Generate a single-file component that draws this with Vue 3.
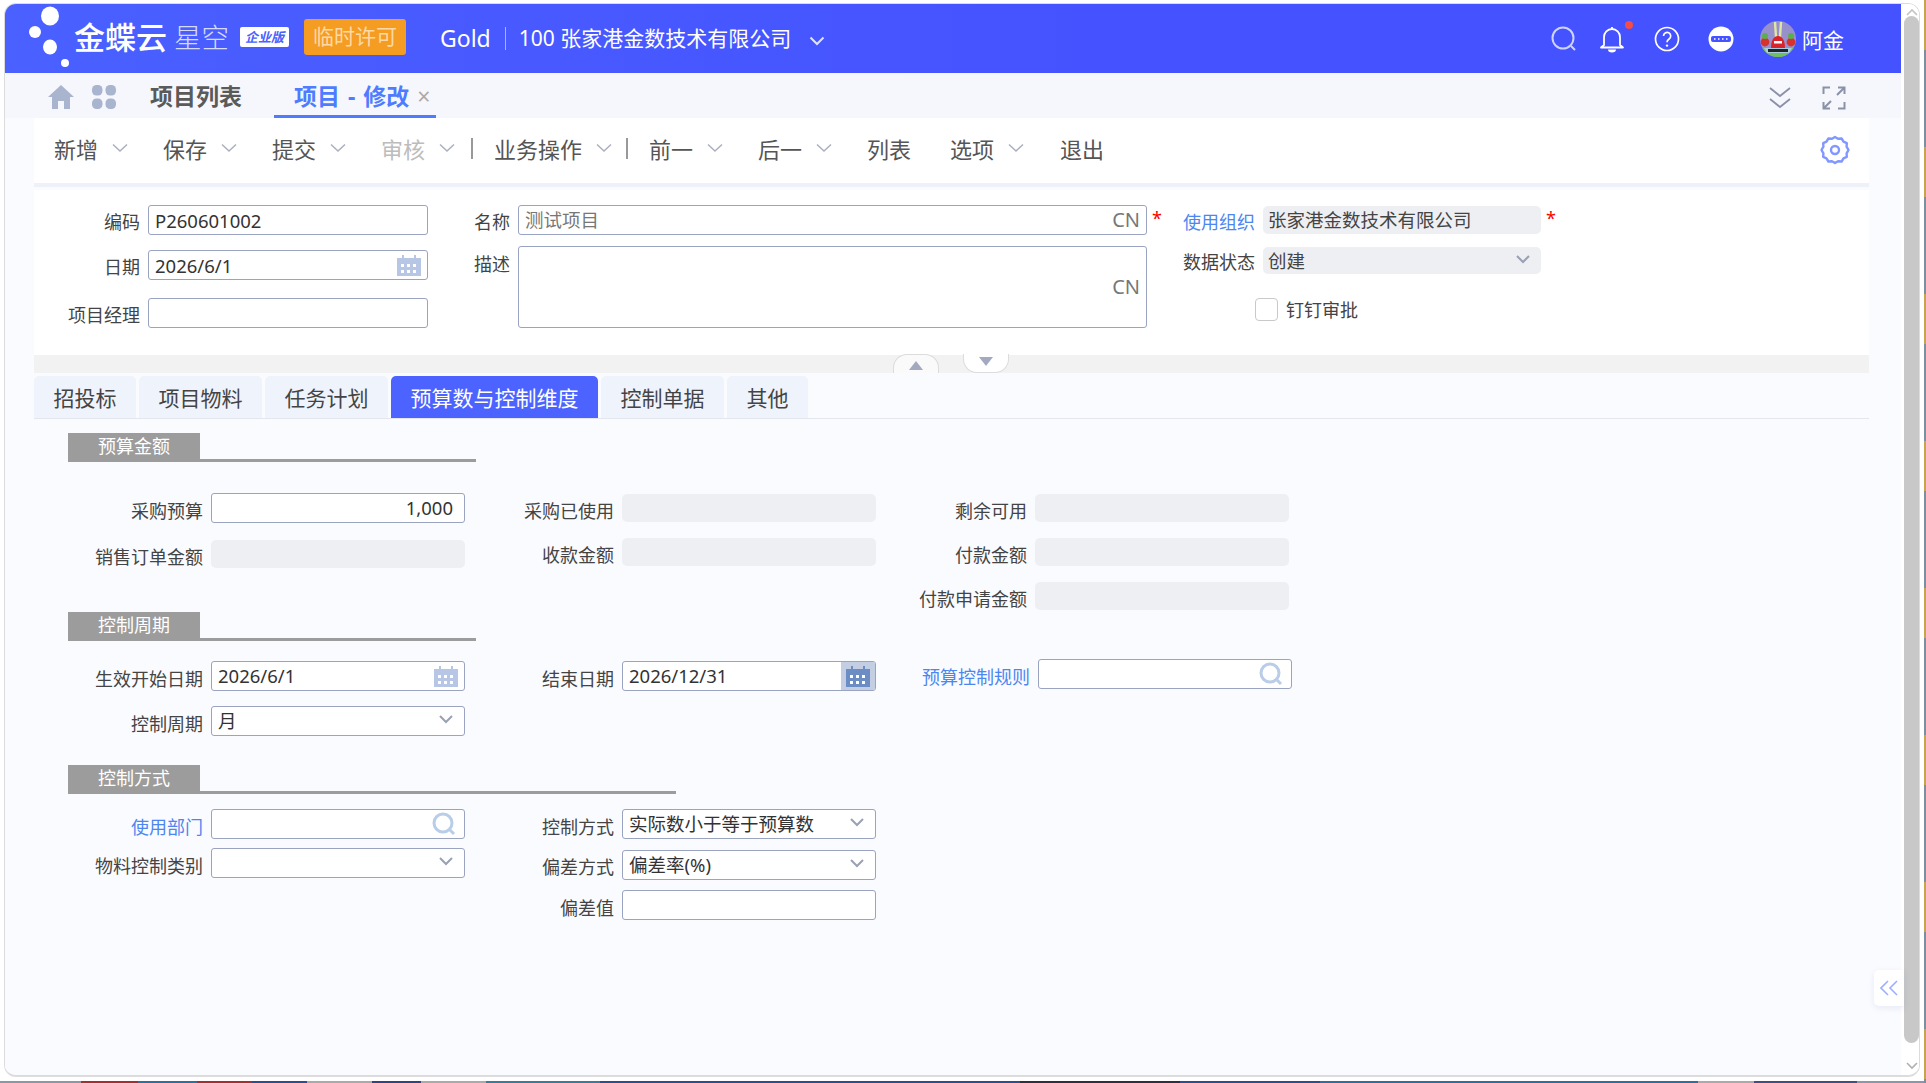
<script setup>
const toolbar = [
  { text: '新增', w: 109 },
  { text: '保存', w: 109 },
  { text: '提交', w: 109 },
  { text: '审核', w: 90, off: true, pipe: true },
  { text: '业务操作', w: 132, pipe: true },
  { text: '前一', w: 109 },
  { text: '后一', w: 109 },
  { text: '列表', w: 83, plain: true },
  { text: '选项', w: 110 },
  { text: '退出', plain: true },
]

const tabs = ['招投标', '项目物料', '任务计划', '预算数与控制维度', '控制单据', '其他']
</script>

<template>
  <div class="desktop">
    <div class="window">
      <div class="main">
        <!-- 顶部导航 -->
        <header class="topbar">
          <div class="logo">
            <svg class="logo-dots" width="48" height="66" viewBox="0 0 48 66">
              <ellipse cx="26" cy="12" rx="9" ry="9.5" fill="#fff" />
              <circle cx="11" cy="28" r="6" fill="#fff" />
              <ellipse cx="26" cy="43" rx="7" ry="7.5" fill="#fff" />
              <circle cx="41" cy="59" r="4" fill="#fff" />
            </svg>
            <span class="logo-main">金蝶云</span>
            <span class="logo-sub">星空</span>
            <span class="logo-badge">企业版</span>
          </div>
          <span class="license">临时许可</span>
          <span class="edition">Gold</span>
          <span class="org">100 张家港金数技术有限公司</span>
          <svg class="org-arrow" width="16" height="10" viewBox="0 0 16 10">
            <path d="M1.5 1.5 8 8l6.5-6.5" fill="none" stroke="#dfe3ff" stroke-width="2" />
          </svg>
          <div class="top-icons">
            <svg class="icon-search" width="28" height="28" viewBox="0 0 28 28">
              <circle cx="13" cy="13" r="10.5" fill="none" stroke="#cdd3ff" stroke-width="2" />
              <path d="m21 21 4 4" stroke="#cdd3ff" stroke-width="2" />
            </svg>
            <span class="bell">
              <svg width="26" height="28" viewBox="0 0 26 28">
                <path d="M13 2v2M5 20V12a8 8 0 0 1 16 0v8l3 2.5H2L5 20Z" fill="none" stroke="#fff" stroke-width="1.8" stroke-linejoin="round" />
                <path d="M9 24.5h8a4 3 0 0 1-8 0Z" fill="#fff" />
              </svg>
              <i class="dot"></i>
            </span>
            <svg class="icon-help" width="26" height="26" viewBox="0 0 26 26">
              <circle cx="13" cy="13" r="11.5" fill="none" stroke="#fff" stroke-width="1.7" />
              <path d="M9.5 10a3.6 3.6 0 1 1 5.6 3c-1.3.9-2.1 1.5-2.1 3.2" fill="none" stroke="#fff" stroke-width="1.7" />
              <circle cx="13" cy="19.6" r="1.2" fill="#fff" />
            </svg>
            <svg class="icon-minus" width="26" height="26" viewBox="0 0 26 26">
              <circle cx="13" cy="13" r="12.5" fill="#fff" />
              <rect x="3" y="10" width="20" height="6" rx="2" fill="#4552ff" />
              <path d="M6 13h14" stroke="#fff" stroke-width="1.5" stroke-dasharray="1.5 2.5" />
            </svg>
            <svg class="avatar" width="36" height="36" viewBox="0 0 36 36">
              <clipPath id="ava"><circle cx="18" cy="18" r="18" /></clipPath>
              <g clip-path="url(#ava)">
                <rect width="36" height="36" fill="#9890cc" />
                <rect y="27" width="36" height="9" fill="#6fbf5a" />
                <path d="M4 27h28l-3 5H7Z" fill="#a7cbe0" />
                <path d="M15 1l1 15M21 1l-1 15" fill="none" stroke="#dfe8a0" stroke-width="2.4" />
                <path d="M11 27c0-8 3-12 7-12s7 4 7 12Z" fill="#d8232a" />
                <circle cx="5" cy="21" r="4.4" fill="#d8322f" />
                <circle cx="31" cy="21" r="4.4" fill="#d8322f" />
                <circle cx="5" cy="15" r="3" fill="#58b04c" />
                <circle cx="31" cy="15" r="3" fill="#58b04c" />
                <rect x="8" y="28" width="20" height="3" fill="#222" />
                <rect x="14" y="20" width="8" height="2.5" fill="#fff" />
              </g>
            </svg>
            <span class="user">阿金</span>
          </div>
        </header>

        <!-- 页签 -->
        <nav class="page-tabs">
          <svg class="home" width="26" height="24" viewBox="0 0 26 24">
            <path d="M13 0 26 12h-4v12h-6v-8h-6v8H4V12H0Z" fill="#a9b5cf" />
          </svg>
          <svg class="apps" width="24" height="24" viewBox="0 0 24 24">
            <g fill="#a9b5cf">
              <rect x="0" y="0" width="10.5" height="10.5" rx="4.5" />
              <rect x="13.5" y="0" width="10.5" height="10.5" rx="4.5" />
              <rect x="0" y="13.5" width="10.5" height="10.5" rx="4.5" />
              <rect x="13.5" y="13.5" width="10.5" height="10.5" rx="4.5" />
            </g>
          </svg>
          <span class="page-tab">项目列表</span>
          <span class="page-tab active">项目 - 修改<i class="close">×</i></span>
          <svg class="collapse" width="24" height="24" viewBox="0 0 24 24">
            <path d="M2 2l10 8 10-8M2 13l10 8 10-8" fill="none" stroke="#8b92a8" stroke-width="1.8" />
          </svg>
          <svg class="expand" width="24" height="24" viewBox="0 0 24 24">
            <path d="M8 1.5H1.5V8M16 1.5h6.5V8M1.5 16v6.5H8M22.5 16v6.5H16M15 9l7-7M9 15l-7 7" fill="none" stroke="#8b92a8" stroke-width="2" />
          </svg>
        </nav>

        <div class="content">
          <!-- 工具栏 -->
          <div class="toolbar">
            <template v-for="item in toolbar" :key="item.text">
              <div class="tool" :class="{ off: item.off }" :style="{ width: item.w ? item.w + 'px' : 'auto' }">
                <span>{{ item.text }}</span>
                <svg v-if="!item.plain" width="16" height="10" viewBox="0 0 16 10">
                  <path d="M1 1.5 8 8l7-6.5" fill="none" stroke="#aab0bf" stroke-width="1.5" />
                </svg>
              </div>
              <i v-if="item.pipe" class="pipe"></i>
            </template>
            <svg class="gear" width="30" height="30" viewBox="0 0 30 30">
              <path d="M15 2l3 1.800 3.600-.3 1.900 3.100 3.300 1.500-.2 3.600L28.500 15l-1.900 3.300.2 3.600-3.300 1.500-1.900 3.100-3.600-.3L15 28l-3-1.800-3.600.3-1.900-3.100-3.300-1.500.2-3.600L1.500 15l1.900-3.300-.2-3.600 3.300-1.500 1.900-3.100 3.600.3Z" fill="none" stroke="#8297ff" stroke-width="2.4" stroke-linejoin="round" />
              <circle cx="15" cy="15" r="4" fill="none" stroke="#8297ff" stroke-width="2.4" />
            </svg>
          </div>

          <!-- 表头 -->
          <div class="head-form">
            <div class="head-col first">
              <div class="row">
                <label class="lb w-head">编码</label>
                <div class="box w-280">P260601002</div>
              </div>
              <div class="row">
                <label class="lb w-head">日期</label>
                <div class="box w-280">
                  2026/6/1
                  <svg class="cal" width="24" height="22" viewBox="0 0 24 22">
                    <path d="M0 4h5V1h2v3h10V1h2v3h5v18H0Z" fill="#b7c6e4" />
                    <g fill="#fff"><rect x="4" y="10" width="3" height="3" /><rect x="10" y="10" width="3" height="3" /><rect x="16" y="10" width="3" height="3" /><rect x="4" y="16" width="3" height="3" /><rect x="10" y="16" width="3" height="3" /><rect x="16" y="16" width="3" height="3" /></g>
                  </svg>
                </div>
              </div>
              <div class="row row-last">
                <label class="lb w-head">项目经理</label>
                <div class="box w-280"></div>
              </div>
            </div>
            <div class="head-col second">
              <div class="row">
                <label class="lb w-name">名称</label>
                <div class="box w-628 gray">测试项目<span class="cn">CN</span></div>
                <span class="star">*</span>
              </div>
              <div class="row row-desc">
                <label class="lb w-name desc-lb">描述</label>
                <div class="box w-628 area"><span class="cn">CN</span></div>
              </div>
            </div>
            <div class="head-col third">
              <div class="row">
                <label class="lb w-org link">使用组织</label>
                <div class="box w-278 dis">张家港金数技术有限公司</div>
                <span class="star">*</span>
              </div>
              <div class="row row-state">
                <label class="lb w-org">数据状态</label>
                <div class="box w-278 dis thin">
                  创建
                  <svg class="arr" width="14" height="9" viewBox="0 0 14 9"><path d="M1 1l6 6 6-6" fill="none" stroke="#9aa1b3" stroke-width="2" /></svg>
                </div>
              </div>
              <div class="check-row">
                <i class="check"></i>
                <span>钉钉审批</span>
              </div>
            </div>
          </div>

          <!-- 折叠条 -->
          <div class="fold">
            <span class="fold-btn up"><i></i></span>
            <span class="fold-btn down"><i></i></span>
          </div>

          <div class="tabs">
            <span v-for="(t, i) in tabs" :key="t" class="tab" :class="{ on: i === 3 }">{{ t }}</span>
          </div>

          <!-- 预算金额 -->
          <section class="sec sec-money">
            <div class="sec-title line-408"><span>预算金额</span></div>
            <div class="cols">
              <div class="col1 gap16">
                <div class="row">
                  <label class="lb w1">采购预算</label>
                  <div class="box w-254 right">1,000</div>
                </div>
                <div class="row">
                  <label class="lb w1">销售订单金额</label>
                  <div class="box w-254 dis"></div>
                </div>
              </div>
              <div class="col2 gap14">
                <div class="row">
                  <label class="lb w2">采购已使用</label>
                  <div class="box w-254 dis"></div>
                </div>
                <div class="row">
                  <label class="lb w2">收款金额</label>
                  <div class="box w-254 dis"></div>
                </div>
              </div>
              <div class="col3 gap14">
                <div class="row">
                  <label class="lb w3">剩余可用</label>
                  <div class="box w-254 dis"></div>
                </div>
                <div class="row">
                  <label class="lb w3">付款金额</label>
                  <div class="box w-254 dis"></div>
                </div>
                <div class="row">
                  <label class="lb w3">付款申请金额</label>
                  <div class="box w-254 dis"></div>
                </div>
              </div>
            </div>
          </section>

          <!-- 控制周期 -->
          <section class="sec sec-period">
            <div class="sec-title line-408"><span>控制周期</span></div>
            <div class="cols">
              <div class="col1 gap15">
                <div class="row">
                  <label class="lb w1">生效开始日期</label>
                  <div class="box w-254">
                    2026/6/1
                    <svg class="cal" width="24" height="22" viewBox="0 0 24 22">
                      <path d="M0 4h5V1h2v3h10V1h2v3h5v18H0Z" fill="#b7c6e4" />
                      <g fill="#fff"><rect x="4" y="10" width="3" height="3" /><rect x="10" y="10" width="3" height="3" /><rect x="16" y="10" width="3" height="3" /><rect x="4" y="16" width="3" height="3" /><rect x="10" y="16" width="3" height="3" /><rect x="16" y="16" width="3" height="3" /></g>
                    </svg>
                  </div>
                </div>
                <div class="row">
                  <label class="lb w1">控制周期</label>
                  <div class="box w-254">
                    月
                    <svg class="arr" width="14" height="9" viewBox="0 0 14 9"><path d="M1 1l6 6 6-6" fill="none" stroke="#9aa1b3" stroke-width="2" /></svg>
                  </div>
                </div>
              </div>
              <div class="col2">
                <div class="row">
                  <label class="lb w2">结束日期</label>
                  <div class="box w-254">
                    2026/12/31
                    <span class="cal-cell">
                      <svg width="24" height="22" viewBox="0 0 24 22">
                        <path d="M0 4h5V1h2v3h10V1h2v3h5v18H0Z" fill="#6c8cc4" />
                        <g fill="#fff"><rect x="4" y="10" width="3" height="3" /><rect x="10" y="10" width="3" height="3" /><rect x="16" y="10" width="3" height="3" /><rect x="4" y="16" width="3" height="3" /><rect x="10" y="16" width="3" height="3" /><rect x="16" y="16" width="3" height="3" /></g>
                      </svg>
                    </span>
                  </div>
                </div>
              </div>
              <div class="col3 rule">
                <div class="row">
                  <label class="lb w3r link">预算控制规则</label>
                  <div class="box w-254">
                    <svg class="find" width="24" height="24" viewBox="0 0 24 24">
                      <circle cx="11" cy="11" r="9" fill="none" stroke="#b9cde8" stroke-width="3" />
                      <path d="m17 17 5 5" stroke="#b9cde8" stroke-width="3" />
                    </svg>
                  </div>
                </div>
              </div>
            </div>
          </section>

          <!-- 控制方式 -->
          <section class="sec sec-mode">
            <div class="sec-title line-608"><span>控制方式</span></div>
            <div class="cols">
              <div class="col1 gap9">
                <div class="row">
                  <label class="lb w1 link">使用部门</label>
                  <div class="box w-254">
                    <svg class="find" width="24" height="24" viewBox="0 0 24 24">
                      <circle cx="11" cy="11" r="9" fill="none" stroke="#b9cde8" stroke-width="3" />
                      <path d="m17 17 5 5" stroke="#b9cde8" stroke-width="3" />
                    </svg>
                  </div>
                </div>
                <div class="row">
                  <label class="lb w1">物料控制类别</label>
                  <div class="box w-254">
                    <svg class="arr" width="14" height="9" viewBox="0 0 14 9"><path d="M1 1l6 6 6-6" fill="none" stroke="#9aa1b3" stroke-width="2" /></svg>
                  </div>
                </div>
              </div>
              <div class="col2 gap10">
                <div class="row">
                  <label class="lb w2">控制方式</label>
                  <div class="box w-254">
                    实际数小于等于预算数
                    <svg class="arr" width="14" height="9" viewBox="0 0 14 9"><path d="M1 1l6 6 6-6" fill="none" stroke="#9aa1b3" stroke-width="2" /></svg>
                  </div>
                </div>
                <div class="row">
                  <label class="lb w2">偏差方式</label>
                  <div class="box w-254">
                    偏差率(%)
                    <svg class="arr" width="14" height="9" viewBox="0 0 14 9"><path d="M1 1l6 6 6-6" fill="none" stroke="#9aa1b3" stroke-width="2" /></svg>
                  </div>
                </div>
                <div class="row">
                  <label class="lb w2">偏差值</label>
                  <div class="box w-254"></div>
                </div>
              </div>
            </div>
          </section>

          <!-- 右侧收起按钮 -->
          <div class="side-btn">
            <svg width="18" height="16" viewBox="0 0 18 16">
              <path d="M8 1 1 8l7 7M17 1l-7 7 7 7" fill="none" stroke="#9db0ff" stroke-width="1.6" />
            </svg>
          </div>
        </div>
      </div>

      <!-- 滚动条 -->
      <div class="scrollbar">
        <svg width="12" height="8" viewBox="0 0 12 8"><path d="M1 7l5-5 5 5" fill="none" stroke="#c4c4c4" stroke-width="1.6" /></svg>
        <div class="thumb"></div>
        <svg width="12" height="8" viewBox="0 0 12 8"><path d="M1 1l5 5 5-5" fill="none" stroke="#b0b0b0" stroke-width="1.6" /></svg>
      </div>
    </div>
  </div>
</template>

<style>
html, body {
  margin: 0;
  overflow: hidden;
}
</style>

<style scoped>
* {
  box-sizing: border-box;
}

.desktop {
  width: 1926px;
  height: 1083px;
  padding: 3px 6px 6px 4px;
  background-color: #fff;
  background-image:
    repeating-linear-gradient(to bottom, #c9a24f 0, #c9a24f 50px, #7d8f9f 50px, #7d8f9f 147px),
    linear-gradient(to right, #8b97a5 0, #8b97a5 81px, #a33030 81px, #a33030 138px, #2f6f9f 138px, #2f6f9f 197px, #a33030 197px, #a33030 252px, #2a4f90 252px, #2a4f90 307px, #aaa 307px, #aaa 372px, #2f4580 372px, #2f4580 421px, #aaa 421px, #aaa 486px, #3a7a9a 486px, #3a7a9a 600px, #2a4f90 600px, #2a4f90 1020px, #2c3040 1020px, #2c3040 1180px, #2a4f90 1180px, #2a4f90 1320px, #2f6f9f 1320px, #2f6f9f 1698px, #aaa 1698px, #aaa 1754px, #3e4f86 1754px, #3e4f86 1857px, #8a97a8 1857px);
  background-repeat: no-repeat;
  background-size: 2px 100%, 100% 2px;
  background-position: right top, left bottom;
  font-family: "Noto Sans", "Noto Sans CJK SC", sans-serif;
  color: #333;
}

.window {
  height: 100%;
  display: flex;
  background: #fff;
  border: 1px solid #dcdcdc;
  border-bottom-width: 2px;
  border-radius: 12px;
  overflow: hidden;
}

.main {
  width: 1896px;
  display: flex;
  flex-direction: column;
}

/* 顶部导航 */
.topbar {
  height: 69px;
  flex: none;
  display: flex;
  align-items: center;
  background: linear-gradient(to right, #4a60ff, #4552ff 60%);
  color: #fff;
}

.logo {
  width: 299px;
  height: 69px;
  flex: none;
  display: flex;
  align-items: center;
  padding-left: 19px;
}

.logo-dots {
  flex: none;
  margin-top: -3px;
}

.logo-main {
  margin-left: 2px;
  font-size: 31px;
  line-height: 1;
  font-weight: 500;
  margin-top: -2px;
}

.logo-sub {
  margin-left: 7px;
  font-size: 27.5px;
  line-height: 1;
  font-weight: 300;
  color: #d5dbff;
  margin-top: -2px;
}

.logo-badge {
  margin-left: 11px;
  width: 49px;
  height: 20px;
  background: #fff;
  border-radius: 2px;
  color: #4a60ff;
  font-size: 13px;
  line-height: 20px;
  font-style: italic;
  font-weight: 700;
  text-align: center;
  margin-top: -4px;
}

.license {
  width: 102px;
  height: 36px;
  flex: none;
  background: #f59c23;
  border-radius: 3px;
  color: #fdd9a5;
  font-size: 21px;
  line-height: 34px;
  text-align: center;
  margin-top: -4px;
}

.edition {
  margin-left: 34px;
  font-size: 23px;
  line-height: 1;
  padding-right: 14px;
  border-right: 1px solid #aab3ff;
  margin-top: -1px;
}

.org {
  margin-left: 13px;
  font-size: 21px;
  line-height: 1;
  margin-top: -1px;
}

.org-arrow {
  margin-left: 18px;
  margin-top: 4px;
}

.top-icons {
  margin-left: auto;
  display: flex;
  align-items: center;
}

.icon-search {
  margin-right: 21px;
}

.bell {
  position: relative;
  display: block;
  height: 28px;
  margin-right: 29px;
}

.dot {
  position: absolute;
  top: -4px;
  right: -8px;
  width: 8px;
  height: 8px;
  border-radius: 50%;
  background: #f44b4b;
}

.icon-help {
  margin-right: 28px;
}

.icon-minus {
  margin-right: 26px;
}

.avatar {
  margin-right: 6px;
}

.user {
  width: 99px;
  font-size: 21px;
}

/* 页签 */
.page-tabs {
  height: 45px;
  flex: none;
  display: flex;
  align-items: center;
  background: #f5f7fc;
  padding-left: 43px;
}

.home {
  margin-right: 18px;
  margin-top: 2px;
}

.apps {
  margin-right: 34px;
  margin-top: 2px;
}

.page-tab {
  height: 45px;
  font-size: 23px;
  font-weight: 700;
  line-height: 46px;
  color: #5a5a5a;
}

.page-tab.active {
  margin-left: 32px;
  width: 162px;
  padding-left: 20px;
  color: #4f7cff;
  border-bottom: 3px solid #4f7cff;
  white-space: nowrap;
  word-spacing: 2px;
}

.close {
  margin-left: 8px;
  font-style: normal;
  font-weight: 400;
  color: #aaa;
}

.collapse {
  margin-left: auto;
  margin-top: 5px;
}

.expand {
  margin-left: 30px;
  margin-right: 55px;
  margin-top: 5px;
}

/* 内容区 */
.content {
  position: relative;
  flex: 1;
  background: #fafbff;
  padding: 0 32px 0 29px;
}

.toolbar {
  height: 65px;
  display: flex;
  align-items: center;
  background: #fff;
  padding-left: 20px;
  padding-bottom: 5px;
  box-shadow: 0 4px 0 #eff1fa;
}

.tool {
  display: flex;
  align-items: center;
  flex: none;
  font-size: 22px;
  color: #555;
  white-space: nowrap;
}

.tool svg {
  margin-left: 14px;
}

.tool.off {
  color: #bcbcbc;
}

.pipe {
  flex: none;
  width: 2px;
  height: 21px;
  background: #999;
  margin-right: 21px;
}

.gear {
  margin-left: auto;
  margin-right: 19px;
  margin-top: 4px;
}

.head-form {
  height: 165px;
  margin-top: 7px;
  padding-top: 15px;
  background: #fff;
  display: flex;
}

.row {
  display: flex;
  align-items: center;
  height: 30px;
  flex: none;
}

.lb {
  flex: none;
  font-size: 18px;
  line-height: 1;
  text-align: right;
  margin-right: 8px;
  color: #444;
  white-space: nowrap;
  padding-top: 3px;
}

.sec .lb {
  padding-top: 5px;
}

.link {
  color: #4d86f0;
}

.box {
  position: relative;
  flex: none;
  height: 30px;
  border: 1px solid #9aa3bf;
  border-radius: 3px;
  background: #fff;
  padding-left: 6px;
  font-size: 18.5px;
  line-height: 28px;
  color: #333;
  white-space: nowrap;
}

.first .box {
  line-height: 30px;
}

.box.gray {
  color: #777;
}

.box.right {
  text-align: right;
  padding-right: 11px;
}

.box.dis {
  height: 28px;
  line-height: 28px;
  background: #eeeff3;
  border: none;
  border-radius: 5px;
  padding-left: 5px;
  color: #444;
}

.box.thin {
  height: 27px;
}

.w-280 {
  width: 280px;
}

.w-628 {
  width: 629px;
}

.w-278 {
  width: 278px;
}

.w-254 {
  width: 254px;
}

.head-col {
  display: flex;
  flex-direction: column;
}

.head-col.first {
  gap: 15px;
}

.row-last {
  margin-top: 3px;
}

.w-head {
  width: 106px;
}

.w-name {
  width: 82px;
}

.row-desc {
  height: 82px;
  margin-top: 11px;
  align-items: flex-start;
}

.desc-lb {
  padding-top: 9px;
}

.box.area {
  height: 82px;
}

.cn {
  position: absolute;
  right: 6px;
  top: 50%;
  transform: translateY(-50%);
  font-size: 20px;
  color: #777;
}

.star {
  color: #f00;
  font-size: 18px;
  margin-left: 5px;
  line-height: 1;
  margin-top: -4px;
}

.w-org {
  width: 93px;
  margin-right: 8px;
}

.row-state {
  margin-top: 10px;
}

.check-row {
  display: flex;
  align-items: center;
  margin-top: 21px;
  margin-left: 93px;
  font-size: 18px;
  color: #444;
}

.check {
  width: 23px;
  height: 23px;
  border: 1px solid #c9c9c9;
  border-radius: 4px;
  margin-right: 8px;
  background: #fff;
}

.cal {
  position: absolute;
  right: 6px;
  top: 3px;
}

.cal-cell {
  position: absolute;
  right: 0;
  top: 0;
  bottom: 0;
  width: 34px;
  background: #c3cee2;
  border-radius: 0 2px 2px 0;
  display: flex;
  align-items: center;
  justify-content: center;
}

.arr {
  position: absolute;
  right: 11px;
  top: 8px;
}

.find {
  position: absolute;
  right: 8px;
  top: 2px;
}

.fold {
  height: 18px;
  background: #f2f2f2;
  display: flex;
  align-items: flex-start;
  padding-left: 859px;
  gap: 24px;
}

.fold-btn {
  width: 46px;
  height: 19px;
  background: #fafafa;
  border: 1px solid #dcdcdc;
  display: flex;
  justify-content: center;
}

.fold-btn.up {
  margin-top: -1px;
  border-bottom: none;
  border-radius: 14px 14px 0 0;
  align-items: flex-end;
  padding-bottom: 3px;
}

.fold-btn.down {
  margin-top: -1px;
  border-top: none;
  border-radius: 0 0 14px 14px;
  padding-top: 3px;
  background: #fff;
}

.fold-btn i {
  width: 0;
  height: 0;
  border-left: 7px solid transparent;
  border-right: 7px solid transparent;
}

.up i {
  border-bottom: 9px solid #a3aac0;
}

.down i {
  border-top: 9px solid #a3aac0;
}

.tabs {
  display: flex;
  gap: 3px;
  margin-top: 3px;
  height: 43px;
  border-bottom: 1px solid #e3e6ef;
}

.tab {
  height: 42px;
  padding: 0 19.5px;
  background: #eff3fb;
  border-radius: 5px 5px 0 0;
  font-size: 21px;
  line-height: 44px;
  color: #444;
  white-space: nowrap;
}

.tab.on {
  background: #4c63ff;
  color: #fff;
}

.sec {
  padding-left: 34px;
}

.sec-money {
  margin-top: 14px;
}

.sec-title {
  height: 29px;
  border-bottom: 3px solid #9c9c9c;
}

.line-408 {
  width: 408px;
}

.line-608 {
  width: 608px;
}

.sec-title span {
  display: block;
  width: 132px;
  height: 29px;
  background: #9c9c9c;
  color: #fff;
  font-size: 18px;
  line-height: 27px;
  padding-left: 30px;
}

.cols {
  display: flex;
}

.sec-money .cols {
  margin-top: 31px;
  height: 119px;
}

.sec-period .cols {
  margin-top: 20px;
  height: 104px;
}

.sec-mode .cols {
  margin-top: 15px;
}

.col1,
.col2,
.col3 {
  display: flex;
  flex-direction: column;
  flex: none;
}

.gap16 {
  gap: 16px;
}

.gap15 {
  gap: 15px;
}

.gap14 {
  gap: 14px;
}

.gap9 {
  gap: 9px;
}

.gap10 {
  gap: 10.5px;
}

.w1 {
  width: 135px;
}

.w2 {
  width: 121px;
}

.w3 {
  width: 122px;
}

.w3r {
  width: 125px;
}

.col2 {
  margin-left: 28px;
}

.col3 {
  margin-left: 29px;
}

.rule {
  margin-top: -2px;
}

.side-btn {
  position: absolute;
  right: -3px;
  top: 852px;
  width: 30px;
  height: 36px;
  background: #fff;
  border-radius: 5px 0 0 5px;
  box-shadow: 0 2px 6px rgba(90, 110, 180, 0.12);
  display: flex;
  align-items: center;
  justify-content: center;
}

/* 滚动条 */
.scrollbar {
  flex: 1;
  background: #fff;
  display: flex;
  flex-direction: column;
  align-items: center;
  padding: 4px 0 4px 3px;
}

.thumb {
  flex: none;
  width: 15px;
  height: 1027px;
  margin-bottom: 19px;
  background: #c8c8c8;
  border-radius: 8px;
}
</style>
